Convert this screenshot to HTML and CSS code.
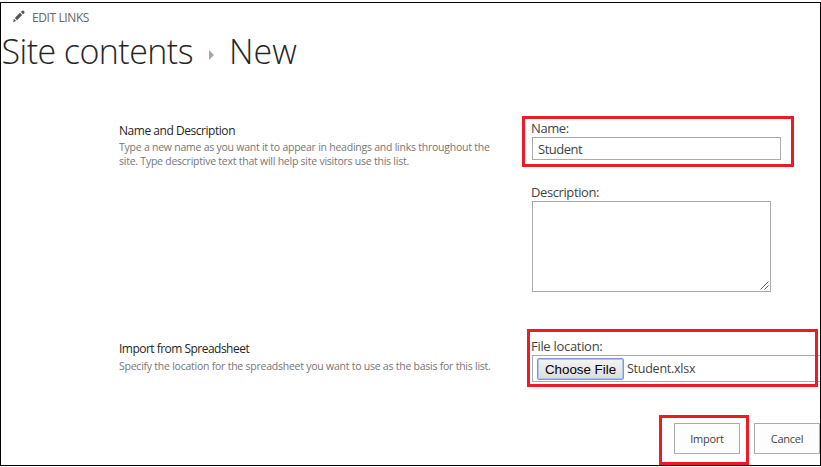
FILE: index.html
```html
<!DOCTYPE html>
<html lang="en">
<head>
<meta charset="utf-8">
<title>New</title>
<link rel="stylesheet" href="styles.css">
</head>
<body>
<div class="page">
  <nav class="edit-links">
    <svg class="pencil" width="12" height="12" viewBox="0 0 12 12"><path d="M0 12 1 8.8 3.2 11ZM1.8 8 7 2.8 9.2 5 4 10.2ZM7.8 2 9.1.7Q9.8.1 10.4.7L11.3 1.6Q11.9 2.3 11.3 2.9L10 4.2Z"/></svg>
    <span class="edit-text">EDIT LINKS</span>
  </nav>
  <h1 class="title">
    <span class="crumb">Site contents</span>
    <svg class="arrow" width="5" height="10" viewBox="0 0 5 10"><path d="M0 0 5 5 0 10Z"/></svg>
    <span class="current">New</span>
  </h1>
  <form class="form">
    <section class="row row-name">
      <div class="info">
        <h2 class="heading h-name">Name and Description</h2>
        <p class="help">Type a new name as you want it to appear in headings and links throughout the<br>site. Type descriptive text that will help site visitors use this list.</p>
      </div>
      <div class="fields">
        <div class="field marked mark-name">
          <label class="label l-name" for="name">Name:</label>
          <input class="input" id="name" type="text" value="Student">
        </div>
        <div class="field field-desc">
          <label class="label l-desc" for="desc">Description:</label>
          <div class="area-wrap">
            <textarea class="area" id="desc"></textarea>
            <svg class="grip" width="9" height="9" viewBox="0 0 9 9"><path d="M.5 8.5 8.5.5M4.5 8.5 8.5 4.5"/></svg>
          </div>
        </div>
      </div>
    </section>
    <section class="row row-import">
      <div class="info">
        <h2 class="heading h-import">Import from Spreadsheet</h2>
        <p class="help">Specify the location for the spreadsheet you want to use as the basis for this list.</p>
      </div>
      <div class="fields">
        <div class="field marked mark-file">
          <span class="label l-file">File location:</span>
          <div class="file">
            <button class="choose" type="button">Choose File</button>
            <span class="filename">Student.xlsx</span>
          </div>
        </div>
      </div>
    </section>
    <div class="actions">
      <div class="marked mark-import"><button class="btn b-import" type="button">Import</button></div>
      <button class="btn b-cancel" type="button">Cancel</button>
    </div>
  </form>
</div>
</body>
</html>
```
FILE: styles.css
```css
*, *::after { box-sizing: border-box; }
body { margin: 0; padding-top: 2px; background: #fff; font-family: "Open Sans", "Noto Sans", sans-serif; color: #444; overflow: hidden; }
.page { width: 821px; height: 464px; border: 1px solid #000; }
.edit-links { display: flex; align-items: center; height: 28px; padding-left: 12px; color: #666; font-size: 12px; white-space: nowrap; }
.pencil { fill: #555; margin-right: 7px; margin-top: -3px; }
.edit-text { letter-spacing: -0.4px; }
.title { display: flex; align-items: center; height: 44px; margin: -2px 0 2px; font-size: 34px; font-weight: 300; line-height: 44px; color: #262626; white-space: nowrap; }
.crumb { width: 208px; letter-spacing: -0.55px; padding-left: .5px; }
.arrow { fill: #a6a6a6; margin: 7px 15px 0 0; }
.current { letter-spacing: 0; }
.form { padding-top: 43px; }
.row { display: grid; grid-template-columns: 412px 289px; padding-left: 118px; height: 218px; }
.row-import { height: 86px; }
.info { padding-top: 4px; white-space: nowrap; }
.heading { margin: 0; font-size: 12px; line-height: 18px; font-weight: 400; color: #262626; letter-spacing: -0.46px; }
.h-import { letter-spacing: -0.52px; }
.help { margin: 0; font-size: 10.5px; line-height: 14px; color: #777; letter-spacing: -0.24px; }
.row-import .help { padding-top: 1px; }
.marked { position: relative; }
.marked::after { content: ""; position: absolute; border: 3px solid #ed1c24; pointer-events: none; }
.mark-name::after { left: -9px; top: -2px; width: 272px; height: 51px; }
.mark-file::after { left: -4px; top: -7px; width: 291px; height: 58px; }
.mark-import::after { left: -15px; top: -8px; width: 90px; height: 50px; }
.label { display: block; height: 19px; font-size: 13px; line-height: 20px; white-space: nowrap; letter-spacing: -0.4px; }
.l-file { letter-spacing: -0.3px; }
.input { display: block; width: 249px; height: 23px; margin-left: 1px; padding: 1px 5px; border: 1px solid #ababab; font: 13px "Open Sans", sans-serif; letter-spacing: -0.5px; color: #444; outline: 0; }
.field-desc { padding-top: 22px; }
.area-wrap { position: relative; width: 239px; height: 91px; margin-left: 1px; }
.area { display: block; width: 239px; height: 91px; border: 1px solid #ababab; resize: none; outline: 0; }
.grip { position: absolute; right: 2px; bottom: 2px; fill: none; stroke: #666; stroke-width: 1; }
.file { display: flex; align-items: center; width: 288px; height: 27px; margin-left: 1px; padding: 0 0 0 4px; border: 1px solid #ababab; border-right: 0; font-size: 12.5px; letter-spacing: -0.25px; }
.l-desc, .l-file { height: 20px; }
.l-desc { height: 19px; }
.l-file { height: 19px; }
.choose { width: 87px; height: 22px; padding: 1px 0 0; border: 1px solid #7a9cd3; border-radius: 2px; box-shadow: inset 0 0 0 1px #a9c4ee; background: linear-gradient(#f4f4f4, #dcdcdc); font: 13.33px "Liberation Sans", Arial, sans-serif; color: #000; }
.filename { margin-left: 3px; }
.actions { display: flex; justify-content: flex-end; gap: 14px; height: 31px; margin-top: 1px; }
.btn { display: block; width: 66px; height: 31px; padding: 0; border: 1px solid #ababab; background: #fdfdfd; font: 11px "Open Sans", sans-serif; letter-spacing: -0.25px; color: #444; }
```
